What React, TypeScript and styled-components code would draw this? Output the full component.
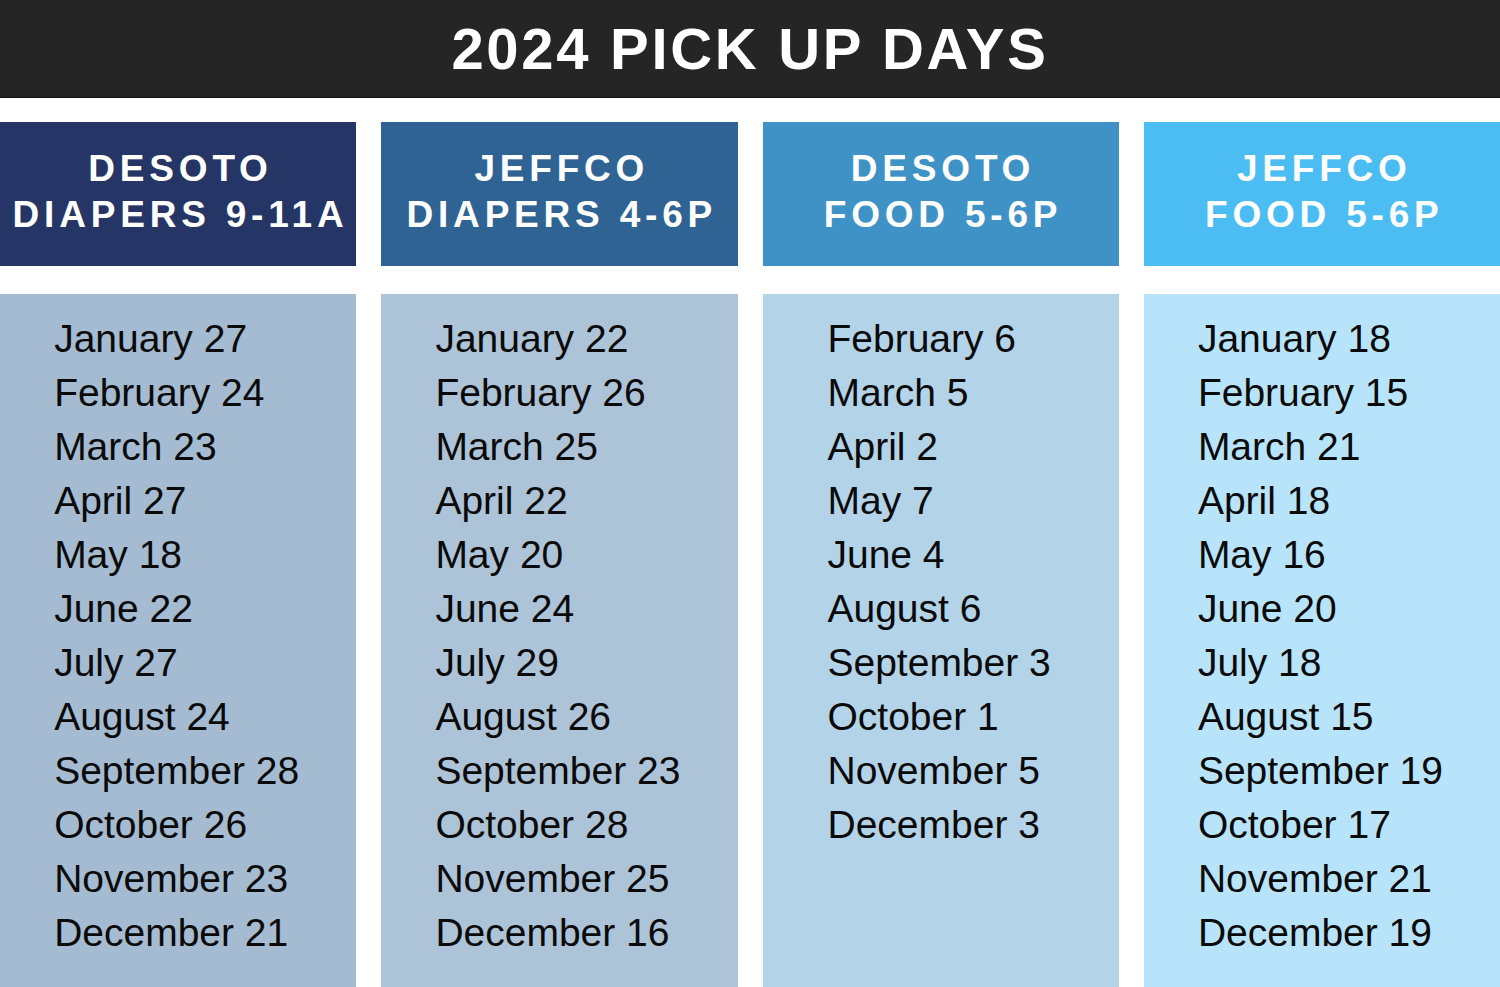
import styled, { createGlobalStyle } from 'styled-components'

const GlobalStyle = createGlobalStyle`
  html, body {
    margin: 0;
    padding: 0;
    background: #ffffff;
  }
  body {
    font-family: 'Liberation Sans', Arial, Helvetica, sans-serif;
  }
`

type Column = {
  place: string
  what: string
  head: string
  body: string
  dates: string[]
}

const columns: Column[] = [
  {
    place: 'DESOTO',
    what: 'DIAPERS 9-11A',
    head: '#253565',
    body: '#a4bbd1',
    dates: [
      'January 27',
      'February 24',
      'March 23',
      'April 27',
      'May 18',
      'June 22',
      'July 27',
      'August 24',
      'September 28',
      'October 26',
      'November 23',
      'December 21',
    ],
  },
  {
    place: 'JEFFCO',
    what: 'DIAPERS 4-6P',
    head: '#2f6394',
    body: '#adc3d7',
    dates: [
      'January 22',
      'February 26',
      'March 25',
      'April 22',
      'May 20',
      'June 24',
      'July 29',
      'August 26',
      'September 23',
      'October 28',
      'November 25',
      'December 16',
    ],
  },
  {
    place: 'DESOTO',
    what: 'FOOD 5-6P',
    head: '#3f92c6',
    body: '#b3d3e8',
    dates: [
      'February 6',
      'March 5',
      'April 2',
      'May 7',
      'June 4',
      'August 6',
      'September 3',
      'October 1',
      'November 5',
      'December 3',
    ],
  },
  {
    place: 'JEFFCO',
    what: 'FOOD 5-6P',
    head: '#4bbdf3',
    body: '#b8e4fb',
    dates: [
      'January 18',
      'February 15',
      'March 21',
      'April 18',
      'May 16',
      'June 20',
      'July 18',
      'August 15',
      'September 19',
      'October 17',
      'November 21',
      'December 19',
    ],
  },
]

const App = () => {
  return (
    <Page>
      <GlobalStyle />
      <TitleBar>
        <Title>2024 PICK UP DAYS</Title>
      </TitleBar>
      <Grid>
        {columns.map((col, i) => (
          <ColumnWrap key={i}>
            <Header $bg={col.head}>
              <HeaderLine>{col.place}</HeaderLine>
              <HeaderLine>{col.what}</HeaderLine>
            </Header>
            <DateList $bg={col.body}>
              <DateBlock>
                {col.dates.map((d) => (
                  <DateItem key={d}>{d}</DateItem>
                ))}
              </DateBlock>
            </DateList>
          </ColumnWrap>
        ))}
      </Grid>
    </Page>
  )
}
export default App

const Page = styled.div`
  width: 1500px;
  height: 987px;
  display: flex;
  flex-direction: column;
  overflow: hidden;
  background: #ffffff;
`

const TitleBar = styled.header`
  height: 98px;
  flex-shrink: 0;
  background-color: #252525;
  border-bottom: 1px solid #111;
  box-sizing: border-box;
  display: flex;
  align-items: center;
  justify-content: center;
`

const Title = styled.h1`
  margin: 0;
  color: #ffffff;
  font-size: 58px;
  font-weight: bold;
  letter-spacing: 2.7px;
  line-height: 1;
`

const Grid = styled.main`
  flex: 1;
  display: grid;
  grid-template-columns: repeat(4, 1fr);
  column-gap: 25px;
  margin-top: 24px;
`

const ColumnWrap = styled.section`
  display: flex;
  flex-direction: column;
  gap: 28px;
`

const Header = styled.div<{ $bg: string }>`
  height: 144px;
  background-color: ${(p) => p.$bg};
  display: flex;
  flex-direction: column;
  align-items: center;
  justify-content: center;
  padding-bottom: 4px;
  box-sizing: border-box;
`

const HeaderLine = styled.div`
  color: #ffffff;
  font-weight: bold;
  font-size: 37px;
  letter-spacing: 4.8px;
  line-height: 46px;
  margin-right: -4.8px;
  white-space: nowrap;
`

const DateList = styled.div<{ $bg: string }>`
  flex: 1;
  background-color: ${(p) => p.$bg};
  display: flex;
  justify-content: center;
  padding-top: 18px;
  padding-right: 3px;
`

const DateBlock = styled.ul`
  list-style: none;
  margin: 0;
  padding: 0;
`

const DateItem = styled.li`
  font-size: 39px;
  line-height: 54px;
  color: #0a0a0a;
  white-space: nowrap;
`
